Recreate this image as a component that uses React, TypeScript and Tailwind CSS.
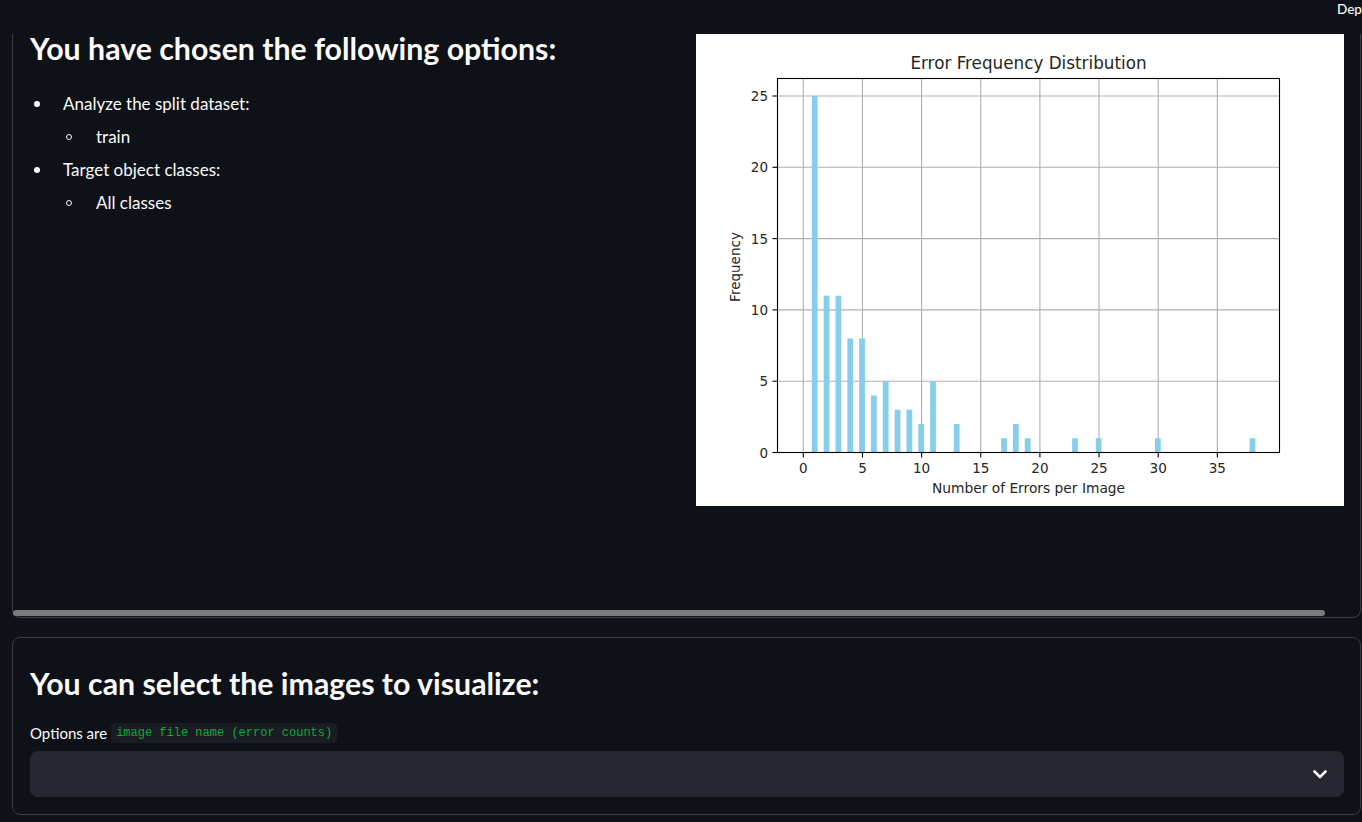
import { FC } from 'react'

// histogram data: [errors per image, number of images]
const bars: [number, number][] = [
  [1, 25], [2, 11], [3, 11], [4, 8], [5, 8], [6, 4], [7, 5], [8, 3], [9, 3], [10, 2],
  [11, 5], [13, 2], [17, 1], [18, 2], [19, 1], [23, 1], [25, 1], [30, 1], [38, 1],
]

const xTicks = [0, 5, 10, 15, 20, 25, 30, 35]
const yTicks = [0, 5, 10, 15, 20, 25]

// axes box in page coords
const AX = { left: 777.5, right: 1279.5, top: 78.5, bottom: 452.5 }
const X = (v: number) => 803.3 + v * 11.83
const Y = (v: number) => 452.5 - v * 14.26

const ErrorChart: FC = () => {
  return (
    <svg width="648" height="472" viewBox="696 34 648 472" className="shrink-0 block">
      <rect x="696" y="34" width="648" height="472" fill="#ffffff" />

      {xTicks.map(t => (
        <line key={'gx' + t} x1={X(t)} x2={X(t)} y1={AX.top} y2={AX.bottom} stroke="#b0b0b0" strokeWidth="1.1" />
      ))}
      {yTicks.map(t => (
        <line key={'gy' + t} x1={AX.left} x2={AX.right} y1={Y(t)} y2={Y(t)} stroke="#b0b0b0" strokeWidth="1.1" />
      ))}

      {bars.map(([v, f]) => (
        <rect key={'bar' + v} x={X(v) - 3.3} y={Y(f)} width="5.8" height={AX.bottom - Y(f)} fill="#87ceeb" />
      ))}

      <rect x={AX.left} y={AX.top} width={AX.right - AX.left} height={AX.bottom - AX.top} fill="none" stroke="#000" strokeWidth="1.1" />

      {xTicks.map(t => (
        <g key={'tx' + t}>
          <line x1={X(t)} x2={X(t)} y1={AX.bottom} y2={AX.bottom + 5} stroke="#000" strokeWidth="1.1" />
          <text x={X(t)} y={473} textAnchor="middle" fontSize="13.5" fill="#262626" fontFamily="DejaVu Sans, sans-serif">{t}</text>
        </g>
      ))}
      {yTicks.map(t => (
        <g key={'ty' + t}>
          <line x1={AX.left - 5} x2={AX.left} y1={Y(t)} y2={Y(t)} stroke="#000" strokeWidth="1.1" />
          <text x={768} y={Y(t) + 5} textAnchor="end" fontSize="13.5" fill="#262626" fontFamily="DejaVu Sans, sans-serif">{t}</text>
        </g>
      ))}

      <text x={1028.5} y={69} textAnchor="middle" fontSize="16.8" fill="#262626" fontFamily="DejaVu Sans, sans-serif">Error Frequency Distribution</text>
      <text x={1028.5} y={493} textAnchor="middle" fontSize="13.8" fill="#262626" fontFamily="DejaVu Sans, sans-serif">Number of Errors per Image</text>
      <text x={0} y={0} transform="translate(740 267) rotate(-90)" textAnchor="middle" fontSize="13.5" fill="#262626" fontFamily="DejaVu Sans, sans-serif">Frequency</text>
    </svg>
  )
}

const options = [
  { label: 'Analyze the split dataset:', sub: 'train' },
  { label: 'Target object classes:', sub: 'All classes' },
]

export default function App() {
  return (
    <div className="w-[1362px] h-[822px] overflow-hidden bg-[#0e1117] text-[#fafafa] font-[Lato,sans-serif]">

      {/* app toolbar, the Deploy button is cut by the window edge */}
      <header className="h-[34px] pl-[1337px] whitespace-nowrap text-[13.5px] leading-[18px] font-medium">
        Dep
      </header>

      {/* chosen options + histogram (scrolled: top border sits under the header) */}
      <section className="ml-[12px] w-[1349px] h-[584px] border-x border-b border-[#3a3c44] rounded-b-lg flex flex-col">
        <div className="flex gap-4 pl-[17px] pr-[16px]">
          <div className="flex-1">
            <h2 className="text-[30.3px] leading-[28px] font-bold">You have chosen the following options:</h2>
            <ul className="mt-[25px]">
              {options.map(o => (
                <li key={o.label}>
                  <div className="flex items-center h-[33px] text-[17px]">
                    <span className="w-[6px] h-[6px] rounded-full bg-[#fafafa] ml-[4px] mr-[23px]" />
                    {o.label}
                  </div>
                  <div className="flex items-center h-[33px] text-[17px] pl-[33px]">
                    <span className="w-[6px] h-[6px] rounded-full border border-[#fafafa] ml-[3px] mr-[24px]" />
                    {o.sub}
                  </div>
                </li>
              ))}
            </ul>
          </div>
          <ErrorChart />
        </div>
        <div className="mt-auto mb-[1px] h-[6px] w-[1312px] rounded-full bg-[#7a7b7e]" />
      </section>

      {/* image picker */}
      <section className="mt-[19px] ml-[12px] w-[1349px] h-[178px] border border-[#3a3c44] rounded-lg px-[17px] pt-[30px]">
        <h2 className="text-[30.3px] leading-[30px] font-bold">You can select the images to visualize:</h2>
        <div className="mt-[25px] h-[20px] flex items-center gap-[4px] text-[15px]">
          <span>Options are</span>
          <code className="bg-[#1a1c23] rounded-[4px] px-[5px] h-[20px] leading-[20px] text-[12px] text-[#09ab3b] font-['Liberation_Mono',monospace]">image file name (error counts)</code>
        </div>
        <div className="mt-[8px] h-[46px] w-[1314px] rounded-lg bg-[#262730] flex items-center justify-end pr-[17px]">
          <svg width="14" height="9" viewBox="0 0 14 9" fill="none">
            <path d="M1.5 1.5 L7 7 L12.5 1.5" stroke="#fafafa" strokeWidth="2.6" strokeLinecap="round" strokeLinejoin="round" />
          </svg>
        </div>
      </section>
    </div>
  )
}
